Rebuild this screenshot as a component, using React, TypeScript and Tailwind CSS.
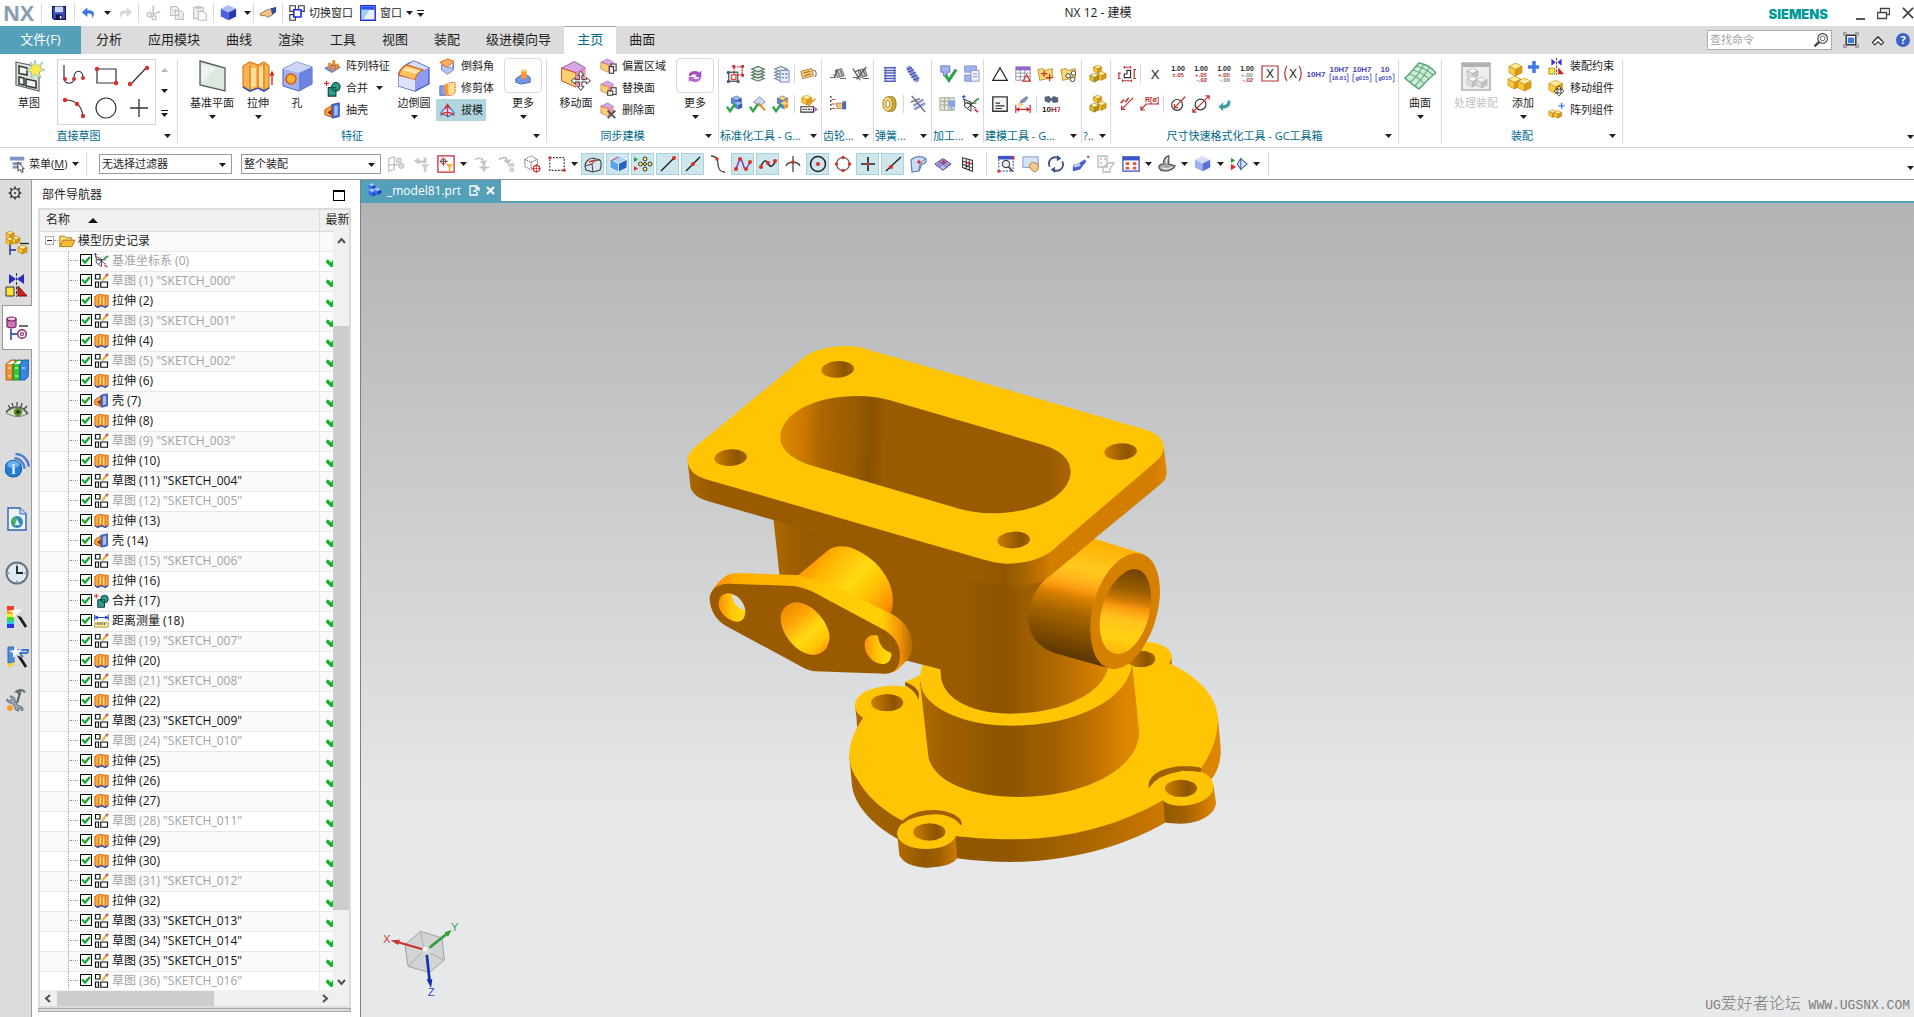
import React, { ReactNode } from "react";

/* ---------- primitives ---------- */

function Svg({ s = 20, vb = 20, children }: { s?: number; vb?: number; children: ReactNode }) {
  return (
    <svg width={s} height={s} viewBox={`0 0 ${vb} ${vb}`} fill="none" className="shrink-0" aria-hidden="true">
      {children}
    </svg>
  );
}

function Caret({ muted = false }: { muted?: boolean }) {
  return (
    <svg width="7" height="4" viewBox="0 0 7 4" className="shrink-0" aria-hidden="true">
      <path d="M0 0H7L3.5 4Z" fill={muted ? "#b4b4b4" : "#1e1e1e"} />
    </svg>
  );
}

const YELLOW = ["#ffeb9c", "#fbc93c", "#dc9a16"];
const BLUE = ["#c3cdf5", "#8496ec", "#4257cf"];
const GRAY = ["#f4f4f4", "#dcdcdc", "#c4c4c4"];

function Box({ x, y, s, c, line = "none" }: { x: number; y: number; s: number; c: string[]; line?: string }) {
  const q = s / 4;
  return (
    <g stroke={line} strokeWidth=".7" strokeLinejoin="round">
      <path d={`M${x} ${y + q}L${x + 2 * q} ${y}L${x + s} ${y + q}L${x + 2 * q} ${y + 2 * q}Z`} fill={c[0]} />
      <path d={`M${x} ${y + q}L${x + 2 * q} ${y + 2 * q}V${y + s}L${x} ${y + 3 * q}Z`} fill={c[1]} />
      <path d={`M${x + s} ${y + q}L${x + 2 * q} ${y + 2 * q}V${y + s}L${x + s} ${y + 3 * q}Z`} fill={c[2]} />
    </g>
  );
}

function Dot({ x, y, r = 1.7 }: { x: number; y: number; r?: number }) {
  return <circle cx={x} cy={y} r={r} fill="#dd2f2a" />;
}

/* ---------- title bar icons ---------- */

const icSave = (
  <Svg s={16}>
    <path d="M2 2H18V18H4L2 16Z" fill="#3f4fc4" stroke="#141a5e" strokeWidth="1.6" />
    <path d="M5 2H15V9H5Z" fill="#cfd6f4" />
    <path d="M6 12H14V18H6Z" fill="#10143c" />
    <path d="M11 13.5H13V17H11Z" fill="#fff" />
  </Svg>
);
const icUndo = (
  <Svg s={16}>
    <path d="M1 9L8 3V7C15 5 19 10 14 17C15 12 13 10 8 11V15Z" fill="#3a76dc" />
  </Svg>
);
const icRedo = (
  <Svg s={16}>
    <path d="M19 9L12 3V7C5 5 1 10 6 17C5 12 7 10 12 11V15Z" fill="#d6d6d6" />
  </Svg>
);
const icCut = (
  <Svg s={16}>
    <path d="M9 1V11M18 8L8 12" stroke="#c4c4c4" strokeWidth="2" />
    <circle cx="4" cy="12" r="2.6" stroke="#c4c4c4" strokeWidth="1.8" />
    <circle cx="10" cy="16" r="2.6" stroke="#c4c4c4" strokeWidth="1.8" />
  </Svg>
);
const icCopy = (
  <Svg s={16}>
    <path d="M2 2H9L12 5V13H2ZM8 7H14L18 10V18H8Z" fill="#f6f6f6" stroke="#c2c2c2" strokeWidth="1.4" />
    <path d="M4 6H9M4 9H7M10 12H16M10 15H16" stroke="#c2c2c2" />
  </Svg>
);
const icPaste = (
  <Svg s={16}>
    <path d="M2 3H14V17H2Z" fill="#ececec" stroke="#c2c2c2" strokeWidth="1.4" />
    <path d="M5 1H11V5H5Z" fill="#c8c8c8" />
    <path d="M8 8H14L18 11V19H8Z" fill="#f9f9f9" stroke="#c2c2c2" strokeWidth="1.4" />
  </Svg>
);
const icCube = (
  <Svg s={18}>
    <Box x={2} y={1} s={17} c={["#aebafa", "#4b60e2", "#2737ae"]} />
  </Svg>
);
const icHand = (
  <Svg s={18}>
    <path d="M1 11L8 7L14 5L15 12L9 15L7 13L2 13Z" fill="#f3c489" stroke="#7a5a30" strokeWidth=".8" />
    <path d="M13 5L19 3V9L15 12Z" fill="#2b4ba0" />
  </Svg>
);
const icSwitch = (
  <Svg s={16}>
    <path d="M1 1H8V8H1ZM12 1H19V8H12ZM1 12H8V19H1Z" stroke="#333" strokeWidth="1.4" fill="#fff" />
    <path d="M6 6H15V15H6Z" fill="#fff" stroke="#1b2ff0" strokeWidth="2" />
  </Svg>
);
const icWindow = (
  <Svg s={16}>
    <path d="M1 1H19V19H1Z" fill="#eaf3fc" stroke="#1a2ff2" strokeWidth="1.8" />
    <path d="M2 2H18V6H2Z" fill="#2a50e6" />
    <path d="M2 6H12L4 18H2Z" fill="#a9cdf0" />
  </Svg>
);

/* ---------- ribbon icons ---------- */

const icSketch = (
  <Svg s={32} vb={32}>
    <path d="M3 2L26 7V31L3 25Z" fill="#dbe4dc" stroke="#5c6660" strokeWidth="1.2" />
    <path d="M6 6L14 8V15L6 13.500ZM6 17L11 18V25L6 24ZM13 19L23 21V28L13 26Z" fill="#edf3ee" stroke="#333" strokeWidth="1.5" />
    <path d="M22 0L24 6L30 2L27 8L32 10L26 12L28 18L22 14L18 18L18.500 12L13 10L19 7.500L17 2L21 5Z" fill="#ffe94c" stroke="#74b8d8" strokeWidth=".7" />
  </Svg>
);
const icPlane = (
  <Svg s={32} vb={32}>
    <path d="M4 1L29 8V31L4 25Z" fill="#dde9df" stroke="#555f58" strokeWidth="1.3" />
    <path d="M6 4L20 8L6 22Z" fill="#eef5ef" />
  </Svg>
);
const icExtrude = (
  <Svg s={32} vb={32}>
    <path d="M1 6L8 2L16 5L22 2L27 6V28L22 31L16 28L8 31L1 27Z" fill="#f7b354" stroke="#e07a1c" strokeWidth="1.2" />
    <path d="M8 5V30M16 6V27M22 4V30" stroke="#d9701c" strokeWidth="1" />
    <path d="M9 8H14V26L9 28ZM17 8L21 6V28L17 26Z" fill="#ffdf96" />
    <path d="M1 27L8 31L16 28L22 31L27 28" stroke="#3556c4" strokeWidth="1.6" />
    <path d="M30 25V13M28 16L30 12L32 16" stroke="#d02a24" strokeWidth="1.4" />
  </Svg>
);
const icHole = (
  <Svg s={32} vb={32}>
    <path d="M2 9L16 2L31 7V24L18 31L2 26Z" fill="#a3b2f0" stroke="#4a63c4" />
    <path d="M2 9L16 2L31 7L18 13Z" fill="#ccd7f8" />
    <path d="M31 7V24L18 31V13Z" fill="#6b82de" />
    <circle cx="10" cy="19" r="5" fill="#ffb52e" stroke="#e2541c" strokeWidth="1.6" />
  </Svg>
);
const icBlend = (
  <Svg s={32} vb={32}>
    <path d="M1 13C3 7 8 4 16 1L31 8V24L17 31L1 26Z" fill="#8d9cf2" stroke="#3b53b8" strokeWidth="1.2" />
    <path d="M16 1L31 8C28 9 26 10 24 11L9 5Z" fill="#d5ddfa" />
    <path d="M1 14C3 8 6 6 9 5L25 10C20 12 18 15 17 20L1 15Z" fill="#fac15a" stroke="#d1621c" strokeWidth="1.2" />
    <path d="M4 10L18 14L22 11L9 7Z" fill="#ffe3ab" />
    <path d="M1 16L17 20V31L1 26Z" fill="#dde4fa" />
  </Svg>
);
const icMore = (
  <Svg s={18}>
    <path d="M2 13L8 9H15L18 12V17L8 19L2 17Z" fill="#7396e4" stroke="#3d5eb4" />
    <path d="M8 4H14V13H8Z" fill="#f79a2c" />
    <ellipse cx="11" cy="4" rx="3" ry="1.800" fill="#ffcf7c" />
  </Svg>
);
const icSync = (
  <Svg s={18}>
    <path d="M3 9C4 4 11 3 15 6L17 4V11H10L12 9C9 7 6 8 5 11Z" fill="#a64fc0" />
    <path d="M17 11C16 17 9 18 5 15L3 17V11H10L8 12.500C11 14 14 13 15 11Z" fill="#b96bd0" />
  </Svg>
);
const icPattern = (
  <Svg s={17}>
    <path d="M1 12L11 7L19 11L9 17Z" fill="#7c98e4" stroke="#4763bb" />
    <path d="M5 6H8V12H5ZM10 3H13V9H10ZM9 9H12V15H9ZM14 7H17V13H14Z" fill="#f79a2c" stroke="#c86518" strokeWidth=".5" />
  </Svg>
);
const uniteShape = (
  <>
    <path d="M5 9H14V19H5Z" fill="#25a08a" stroke="#1a3c36" strokeWidth="1.3" />
    <circle cx="14" cy="8" r="5" fill="#25a08a" stroke="#1a3c36" strokeWidth="1.3" />
    <path d="M9 9H14V13" stroke="#1a3c36" strokeWidth="1" />
    <path d="M0 4H6M3 1V7" stroke="#d8231f" strokeWidth="1.3" />
  </>
);
const icUnite = <Svg s={17}>{uniteShape}</Svg>;
const shellShape = (
  <>
    <path d="M9 3L18 1V17L10 19Z" fill="#4b74d6" stroke="#2a4aa4" />
    <path d="M1 9L9 4V18L1 15Z" fill="#f7a23c" stroke="#a94417" />
    <path d="M4 12L9 9V16Z" fill="#8c2f17" />
    <path d="M12 5L16 4V15L12 16Z" fill="#a8c0f4" />
  </>
);
const icShell = <Svg s={17}>{shellShape}</Svg>;
const icChamfer = (
  <Svg s={17}>
    <path d="M3 8L16 12L17 5V14L10 19L3 14Z" fill="#b9c6f3" stroke="#5d76cc" />
    <path d="M1 5L10 1L18 4L9 11Z" fill="#fbb45e" stroke="#cf5a22" />
  </Svg>
);
const icTrim = (
  <Svg s={17}>
    <path d="M1 7H9V18H1Z" fill="#8e9cec" stroke="#4a5fc4" />
    <path d="M9 5L14 3H19V15L15 18H9Z" fill="#fde08c" stroke="#d0342a" strokeDasharray="2 1" />
    <path d="M6 5H11V18H7Z" fill="#f39a3c" />
  </Svg>
);
const icDraft = (
  <Svg s={17}>
    <path d="M10 3L18 13L11 17L2 13Z" fill="#cfdcf8" stroke="#3a5cc0" strokeWidth="1.2" />
    <path d="M10 18V4M7 8L10 3L13 8M2 16C5 11 14 11 18 16" stroke="#d8302a" strokeWidth="1.5" />
  </Svg>
);
function faceBox(extra: ReactNode, s: number) {
  return (
    <Svg s={s}>
      <path d="M1 5L9 1L16 5L10 8Z" fill="#d7a9e4" stroke="#9a56b4" strokeWidth=".6" />
      <path d="M1 5L10 8V17L1 13Z" fill="#fccf72" stroke="#d2402c" strokeWidth=".6" />
      <path d="M16 5L10 8V17L16 13Z" fill="#eb94ad" />
      {extra}
    </Svg>
  );
}
const icMoveFace = faceBox(
  <path d="M13 7L15 9.500H13.700V12.300H16.500V11L19 13L16.500 15V13.700H13.700V16.500H15L13 19L11 16.500H12.300V13.700H9.500V15L7 13L9.500 11V12.300H12.300V9.500H11Z" fill="#fff" stroke="#333" strokeWidth=".6" />,
  32,
);
const icOffset = faceBox(<path d="M11 10V18H16V10ZM13 10V7H19V15H16" fill="#f3f3f3" stroke="#333" strokeWidth="1.2" />, 17);
const icReplace = faceBox(<path d="M9 13H15V18H9ZM13 13V9H19V17H15" fill="#f3f3f3" stroke="#333" strokeWidth="1.2" />, 17);
const icDelete = faceBox(<path d="M9 10L18 19M18 10L9 19" stroke="#555" strokeWidth="2.2" />, 17);

const icSurface = (
  <Svg s={32} vb={32}>
    <path d="M1 18C6 14 10 8 15 3C22 4 28 8 32 13C26 17 21 23 15 29C11 26 6 23 1 18Z" fill="#cfead8" stroke="#4fa374" strokeWidth="1.4" />
    <path d="M5 14C12 16 17 20 20 24M9 10C16 12 21 15 25 19M12 6C19 7 24 11 29 15M6 22C11 19 16 12 20 4M11 26C16 21 21 15 25 8" stroke="#5aab7d" strokeWidth="1.1" />
  </Svg>
);
const icProcess = (
  <Svg s={32} vb={32}>
    <path d="M2 3H30V30H2Z" fill="#eeeeee" stroke="#b2b2b2" strokeWidth="1.6" />
    <path d="M2 3H30V7H2Z" fill="#b0b0b0" />
    <Box x={7} y={8} s={11} c={GRAY} line="#b6b6b6" />
    <Box x={7} y={16} s={11} c={GRAY} line="#b6b6b6" />
    <Box x={16} y={17} s={11} c={GRAY} line="#b6b6b6" />
  </Svg>
);
const icAdd = (
  <Svg s={32} vb={32}>
    <Box x={2} y={3} s={13} c={YELLOW} line="#c78a14" />
    <Box x={1} y={16} s={13} c={YELLOW} line="#c78a14" />
    <Box x={11} y={18} s={13} c={YELLOW} line="#c78a14" />
    <path d="M27 1V13M21 7H32" stroke="#3f7be8" strokeWidth="3.500" />
  </Svg>
);
const icConstraint = (
  <Svg s={17}>
    <path d="M4 1V9L9 5ZM16 1V9L11 5Z" fill="#3a2fd0" />
    <path d="M10 0V20" stroke="#333" strokeDasharray="3 1.500" />
    <path d="M1 12H8V19H1Z" fill="#ffe34a" stroke="#a88b0e" />
    <path d="M12 11L19 19H12Z" fill="#d0201c" />
  </Svg>
);
const icMoveComp = (
  <Svg s={17}>
    <Box x={1} y={0} s={16} c={YELLOW} line="#c78a14" />
    <path d="M13 7L15.500 10H14V12H16V10.500L19 13L16 15.500V14H14V16H15.500L13 19L10.500 16H12V14H10V15.500L7 13L10 10.500V12H12V10H10.500Z" fill="#fff" stroke="#222" strokeWidth=".8" />
  </Svg>
);
const icPatternComp = (
  <Svg s={17}>
    <Box x={1} y={9} s={9} c={YELLOW} line="#c07f10" />
    <Box x={7} y={10} s={9} c={YELLOW} line="#c07f10" />
    <path d="M16 1V8M12.500 4.500H19.500" stroke="#3f7be8" strokeWidth="1.600" />
  </Svg>
);

/* sketch gallery */
const icProfile = (
  <Svg s={24} vb={24}>
    <path d="M2 1V14C2 21 12 21 12 14C12 5 21 5 21 14" stroke="#333" strokeWidth="1.200" />
    <Dot x={3} y={15} r={2} />
    <Dot x={12} y={15} r={2} />
    <Dot x={21} y={14} r={2} />
  </Svg>
);
const icRect = (
  <Svg s={24} vb={24}>
    <path d="M3 5H22V19H3Z" stroke="#333" strokeWidth="1.200" />
    <Dot x={3} y={5} r={2.200} />
    <Dot x={22} y={19} r={2.200} />
  </Svg>
);
const icLine = (
  <Svg s={24} vb={24}>
    <path d="M3 21L20 3" stroke="#333" strokeWidth="1.200" />
    <Dot x={3} y={20} r={2.200} />
    <Dot x={20} y={4} r={2.200} />
  </Svg>
);
const icArc = (
  <Svg s={24} vb={24}>
    <path d="M3 4C14 4 20 10 21 21" stroke="#333" strokeWidth="1.200" />
    <Dot x={3} y={4} r={2.200} />
    <Dot x={15} y={8} r={2.200} />
    <Dot x={21} y={20} r={2.200} />
  </Svg>
);
const icCircle = (
  <Svg s={24} vb={24}>
    <circle cx="12" cy="12" r="10" stroke="#333" strokeWidth="1.200" />
  </Svg>
);
const icPlus = (
  <Svg s={24} vb={24}>
    <path d="M12 3V21M3 12H21" stroke="#333" strokeWidth="1.300" />
  </Svg>
);

/* GC toolkit */
const gcSelect = (
  <Svg s={18}>
    <path d="M9 2H18V11H9Z" stroke="#d5302b" strokeWidth="1.500" strokeDasharray="2 1" />
    <path d="M3 8H13V18H3Z" stroke="#5a6274" strokeWidth="1.500" />
    <path d="M6 11H11V16H6Z" stroke="#e05238" strokeWidth="1.500" />
    <path d="M7 0H10V3H7ZM17 0H20V3H17ZM17 10H20V13H17Z" fill="#d5302b" />
    <path d="M1 7H4V10H1ZM1 17H4V20H1ZM12 17H15V20H12Z" fill="#4c5670" />
  </Svg>
);
const stack = (c: string) => (
  <>
    <path d="M3 15L10 12L17 15L10 18Z" stroke={c} strokeWidth="1.300" fill="#e4efe6" />
    <path d="M3 11.500L10 8.500L17 11.500L10 14.500Z" stroke={c} strokeWidth="1.300" fill="#e4efe6" />
    <path d="M3 8L10 5L17 8L10 11Z" stroke={c} strokeWidth="1.300" fill="#e4efe6" />
    <path d="M3 4.500L10 1.500L17 4.500L10 7.500Z" stroke={c} strokeWidth="1.300" fill="#e4efe6" />
  </>
);
const gcLayers = <Svg s={18}>{stack("#5b7564")}</Svg>;
const gcLayerDoc = (
  <Svg s={18}>
    {stack("#7b8f9a")}
    <path d="M9 6H19V19H9Z" fill="#e4ebfb" stroke="#6b83c6" />
    <path d="M11 10H13M15 10H17M11 14H13M15 14H17" stroke="#3f67c9" strokeWidth="1.600" />
  </Svg>
);
const gcTag = (
  <Svg s={18}>
    <path d="M1 7L13 4L15 12L3 15Z" fill="#fbc97a" stroke="#b0792a" />
    <path d="M4 9L11 7M5 12L12 10" stroke="#8a5a1c" />
    <path d="M14 6C18 5 19 10 17 13" stroke="#777" strokeWidth="1.200" />
  </Svg>
);
const partCheck = (c: string[]) => (
  <Svg s={18}>
    <Box x={6} y={1} s={11} c={c} line="#3c5aa8" />
    <Box x={9} y={7} s={9} c={c} />
    <path d="M1 13L4.500 18L10 10" stroke="#2fa548" strokeWidth="2.600" />
  </Svg>
);
const gcPartA = partCheck(["#9dbcf0", "#5c86dc", "#335bb4"]);
const gcPartB = (
  <Svg s={18}>
    <path d="M5 8L12 2L18 8L12 12Z" fill="#cfdaf2" stroke="#6b86c6" />
    <path d="M10 9L18 17" stroke="#e0932c" strokeWidth="2.400" />
    <path d="M1 13L4.500 18L10 10" stroke="#2fa548" strokeWidth="2.600" />
  </Svg>
);
const gcPartC = partCheck(["#ffd37a", "#5c86dc", "#f2992a"]);
const gcEdit = (
  <Svg s={18}>
    <Box x={2} y={0} s={11} c={YELLOW} line="#c78a14" />
    <path d="M1 13H15V19H1Z" fill="#fff" stroke="#333" strokeWidth="1.200" />
    <path d="M3 16H13" stroke="#333" strokeWidth="1.600" strokeDasharray="2 1" />
    <path d="M9 12L17 4" stroke="#e0a53a" strokeWidth="2.200" />
    <path d="M16 13L20 16L16 19Z" fill="#b25ad0" />
  </Svg>
);
const gearPair = (lines: string) => (
  <Svg s={18}>
    <path d="M7 6L14 4L17 12L9 14Z" fill="#c6c6c6" stroke="#666" strokeWidth="1" />
    <path d="M1 14H7L5 10M12 15H19M9 6L12 13M12 5L15 12" stroke="#555" strokeWidth="1" />
    <path d={lines} stroke="#555" strokeWidth="1.300" />
  </Svg>
);
const gcGearA = gearPair("M6 14L9 5");
const gcGearB = gearPair("M1 4L9 17M3 8L8 5M5 16L16 2");
const gcGearC = (
  <Svg s={18}>
    <path d="M2 1V19" stroke="#444" strokeWidth="1.600" strokeDasharray="2 2.500" />
    <path d="M3 5H7M3 10H7M3 15H7" stroke="#c03a30" />
    <path d="M8 9H15V15H9Z" fill="#f5c77e" stroke="#9a7030" strokeWidth=".7" />
    <path d="M15 7H19V16H15Z" fill="#4b62c6" />
  </Svg>
);
const gcSpringA = (
  <Svg s={18}>
    <path d="M5 2V18M15 2V18" stroke="#8f9bd6" strokeWidth="2" />
    <path d="M4 3H16M4 6H16M4 9H16M4 12H16M4 15H16M4 18H16" stroke="#4f60b8" strokeWidth="1.700" strokeLinecap="round" />
  </Svg>
);
const gcSpringB = (
  <Svg s={18}>
    <path d="M6 4L14 16" stroke="#8d99d8" strokeWidth="6" strokeLinecap="round" />
    <path d="M3 5L9 3M4 8L11 5M6 11L13 8M8 14L15 11M10 17L17 14" stroke="#3b4aa4" strokeWidth="1.200" />
  </Svg>
);
const gcDisc = (
  <Svg s={18}>
    <path d="M8 2H13C18 3 18 17 13 18H8Z" fill="#cfa93a" stroke="#8f7018" />
    <ellipse cx="7.500" cy="10" rx="5.500" ry="8" fill="#f3d877" stroke="#9a7a20" />
    <ellipse cx="7.500" cy="10" rx="2.200" ry="4" fill="#fff" stroke="#9a7a20" />
  </Svg>
);
const gcNoSpring = (
  <Svg s={18}>
    <path d="M5 12L16 5M6 16L18 9" stroke="#8b99d4" strokeWidth="2.800" />
    <path d="M3 1L18 19M2 8L12 4" stroke="#666" strokeWidth="1.500" />
  </Svg>
);
const gcMachA = (
  <Svg s={18}>
    <path d="M2 1H12V8H9V12H5V8H2Z" fill="#a3b4ec" stroke="#5d74c0" />
    <path d="M7 11L11 17L19 5" stroke="#27a546" strokeWidth="3.400" />
  </Svg>
);
const gcMachB = (
  <Svg s={18}>
    <path d="M3 1H16V8H3ZM3 11H10V18H3Z" fill="#a3b4ec" stroke="#8092cc" />
    <path d="M10 6H19V18H10Z" fill="#f0f3fc" stroke="#7d8fc8" />
    <path d="M12 10H17M12 13H17" stroke="#7d8fc8" />
  </Svg>
);
const gcMachC = (
  <Svg s={18}>
    <path d="M1 3H17V17H1ZM1 7H17M1 11H17M6 3V17M11 3V17" fill="#e2e7da" stroke="#9aa58c" />
    <path d="M10 6H18V13H15V17H13V13H10Z" fill="#8ea2e2" />
  </Svg>
);
const csysShape = (
  <>
    <path d="M3 5L10 8V18L3 13ZM3 9H16M6 15L15 6M5 8L16 15" stroke="#333" strokeWidth="1.100" />
    <path d="M2 0V6M0 2H4" stroke="#2a3fd0" strokeWidth="1.200" />
    <path d="M14 7L19 4" stroke="#23a040" strokeWidth="2" />
    <path d="M14 16L18 19" stroke="#d0302a" strokeWidth="1.800" />
  </>
);
const gcCsys = <Svg s={18}>{csysShape}</Svg>;
const gcTriangle = (
  <Svg s={18}>
    <path d="M10 3L18 17H2Z" stroke="#222" strokeWidth="1.400" />
  </Svg>
);
const gcTable = (
  <Svg s={18}>
    <path d="M2 2H18V17H2ZM2 9H18M2 13H18M7 5V17M12 5V17" fill="#fff" stroke="#8e8ea0" />
    <path d="M2 2H18V6H2Z" fill="#9468cc" />
    <path d="M14 11L18 18H10Z" fill="#fff" stroke="#cc2b2b" strokeWidth="1.300" />
  </Svg>
);
const folderBase = <path d="M1 5L7 4L9 6L17 4V14L3 17Z" fill="#fbd978" stroke="#b98f26" />;
const gcFolderA = (
  <Svg s={18}>
    {folderBase}
    <path d="M8 6V13M4.500 9.500H11.500M14 10V18M10 14H18" stroke="#cf2b26" strokeWidth="1.400" />
  </Svg>
);
const gcFolderB = (
  <Svg s={18}>
    {folderBase}
    <circle cx="9" cy="12" r="2.500" fill="#fff" stroke="#333" />
    <circle cx="15" cy="9" r="2.500" fill="#fff" stroke="#333" />
    <circle cx="14" cy="16" r="2.500" fill="#fff" stroke="#333" />
  </Svg>
);
const gcNote = (
  <Svg s={18}>
    <path d="M2 2H18V18H2Z" fill="#f4f4f4" stroke="#333" strokeWidth="1.500" />
    <path d="M5 9H10M5 12H15M5 15H12" stroke="#333" strokeWidth="1.300" />
  </Svg>
);
const gcBrush = (
  <Svg s={18}>
    <path d="M14 1L16 3L12 8L6 10L7 6Z" fill="#7a8fb4" />
    <path d="M5 8L11 10L8 13L4 12Z" fill="#f4d58a" />
    <path d="M2 11V20M18 11V20M3 16H17M6 14L3 16L6 18M14 14L17 16L14 18" stroke="#cc2b2b" strokeWidth="1.300" />
  </Svg>
);
const gcFind = (
  <Svg s={18}>
    <path d="M3 2L8 1L10 4L13 1L18 3V8L13 9L10 6L8 9L3 7Z" fill="#56617a" />
    <text x="0" y="19" fontSize="9" fontWeight="700" fill="#222" fontFamily="Liberation Sans">
      10<tspan fill="#b03030">H7</tspan>
    </text>
  </Svg>
);
const gcBoxes = (
  <Svg s={18}>
    <Box x={5} y={0} s={9} c={YELLOW} line="#b98512" />
    <Box x={9} y={7} s={10} c={YELLOW} line="#b98512" />
    <Box x={1} y={9} s={10} c={["#fff3b8", "#e7c12c", "#b98f12"]} line="#8c7010" />
  </Svg>
);
const dimShaft = (
  <Svg s={18}>
    <path d="M7 14V10H10V6H14V14Z" stroke="#333" strokeWidth="1.300" />
    <path d="M1 9V15M0 9H3M0 15H3M18 5V15M17 5H20M17 15H20M7 1V4M14 1V4M7 2.500H14M5 16V19M15 16V19M5 17.500H15" stroke="#c03030" strokeWidth="1.300" />
  </Svg>
);
const txt = (t: string, x: number, y: number, size: number, fill: string, bold = false) => (
  <text key={`${t}${x}${y}`} x={x} y={y} fontSize={size} fill={fill} fontWeight={bold ? 700 : 400} fontFamily="Liberation Sans" textAnchor="middle">
    {t}
  </text>
);
const dimX = <Svg>{txt("X", 10, 15, 13, "#222")}</Svg>;
const dimTol = (a: string, b: string | null, ca: string, cb: string) => (
  <Svg>
    {txt("1.00", 10, 7, 7, "#222", true)}
    {txt(a, 10, 13, 6, ca, true)}
    {b && txt(b, 11, 18, 6, cb, true)}
  </Svg>
);
const dimBoxX = (
  <Svg>
    <path d="M2 2H18V17H2Z" stroke="#b53232" strokeWidth="1.200" />
    {txt("X", 10, 14, 12, "#222")}
  </Svg>
);
const dimParenX = (
  <Svg>
    <path d="M4 2C1 6 1 13 4 17M16 2C19 6 19 13 16 17" stroke="#b53232" strokeWidth="1.200" />
    {txt("X", 10, 14, 12, "#222")}
  </Svg>
);
const dimH7 = <Svg>{txt("10H7", 10, 13, 8, "#4646b8", true)}</Svg>;
const dimH7b = (top: string, low: string) => (
  <Svg>
    {txt(top, 10, 8, 8, "#4646b8", true)}
    {txt(low, 10, 16, 6, "#4646b8", true)}
    <path d="M2.500 10H1V18H2.500M17.500 10H19V18H17.500" stroke="#4646b8" strokeWidth=".8" />
  </Svg>
);
const dimRadA = (
  <Svg s={18}>
    <path d="M4 16L17 3M4 12V16H8" stroke="#c03030" strokeWidth="1.300" />
    <path d="M3 9L7 5M8 8L12 3" stroke="#c03030" strokeWidth="1.700" />
  </Svg>
);
const dimRadB = (
  <Svg s={20}>
    <path d="M1 16L6 10H19M1 12V16H5" stroke="#c03030" strokeWidth="1.200" />
    {txt("R[ø]", 12, 8, 7, "#c03030", true)}
  </Svg>
);
const dimDiaA = (
  <Svg s={18}>
    <circle cx="9" cy="11" r="6" stroke="#333" strokeWidth="1.300" />
    <path d="M6 14L18 2M6 10V14H10" stroke="#c03030" strokeWidth="1.400" />
  </Svg>
);
const dimDiaB = (
  <Svg s={18}>
    <circle cx="9.500" cy="10.500" r="6" stroke="#333" strokeWidth="1.300" />
    <path d="M1 19L19 1M1 15V19H5M15 1H19V5" stroke="#c03030" strokeWidth="1.400" />
  </Svg>
);
const dimBack = (
  <Svg s={18}>
    <path d="M4 13L9 8V11C12 11 14 10 14 6H17C18 12 14 15 9 15V18Z" fill="#3f9ea4" />
  </Svg>
);

/* ---------- selection bar icons ---------- */

const sbMenu = (
  <Svg s={18}>
    <path d="M1 2H17V6H1ZM4 8H14V11H4ZM4 12H10V15H4Z" fill="#7e93c4" />
    <path d="M10 8V18L12.500 16L14 19.500L15.800 18.800L14.500 15.500H17Z" fill="#fff" stroke="#222" strokeWidth=".9" />
  </Svg>
);
const sbTree = (
  <Svg s={18}>
    <path d="M2 4L8 2V16L2 18ZM2 11H13" stroke="#bdbdbd" strokeWidth="1.300" />
    <circle cx="13" cy="6" r="3" fill="#dadada" stroke="#bcbcbc" />
    <circle cx="16" cy="12" r="3" fill="#dadada" stroke="#bcbcbc" />
  </Svg>
);
const sbFilterOff = (
  <Svg s={18}>
    <path d="M2 6L8 3V6H13V3H16V9H8V11Z" fill="#c8c8c8" />
    <path d="M10 10H19L16 14V19H13V14Z" fill="#d0d0d0" />
  </Svg>
);
const sbFilter = (
  <Svg s={18}>
    <path d="M1 1H19V19H1Z" stroke="#c52a38" strokeWidth="1.400" />
    <circle cx="7" cy="7" r="3" stroke="#c52a38" />
    <path d="M7 3V12M3 7H12" stroke="#333" />
    <path d="M10 10H18L15 14V18H13V14Z" fill="#f2b53a" />
  </Svg>
);
const sbRot = (
  <Svg s={18}>
    <path d="M2 5C8 2 12 4 12 9M8 7L12 10L15 6M12 9V19M7 14H18" stroke="#bdbdbd" strokeWidth="1.500" />
    <circle cx="12" cy="14" r="2.500" stroke="#bdbdbd" />
  </Svg>
);
const sbRot2 = (
  <Svg s={18}>
    <path d="M1 5C7 1 10 3 11 8M7 6L11 9L14 5" stroke="#c0c0c0" strokeWidth="2" />
    <path d="M11 9H18V13H11ZM13 14H18V19H13Z" fill="#d2d2d2" />
  </Svg>
);
const sbCube = (
  <Svg s={18}>
    <path d="M2 5L9 1L16 5V13L9 16L2 13ZM2 5L9 8L16 5M9 8V16" stroke="#444" strokeDasharray="1.500 1" />
    <circle cx="15" cy="15" r="3.500" fill="#fff" stroke="#cc2b2b" strokeWidth="1.300" />
    <path d="M15 10V20M10 15H20" stroke="#cc2b2b" strokeWidth=".8" />
  </Svg>
);
const sbMarquee = (
  <Svg s={18}>
    <path d="M2 3H18V17H2Z" stroke="#333" strokeWidth="1.300" strokeDasharray="2 1.500" />
    <Dot x={2} y={3} />
    <Dot x={18} y={17} />
  </Svg>
);
const sbSolid = (
  <Svg>
    <path d="M2 12C2 8 6 4 10 4L17 6C19 9 18 13 17 16L10 18L3 16Z" fill="#dce3ee" stroke="#444" strokeWidth="1.100" />
    <path d="M2 12L9 10L10 18M9 10C10 7 13 6 17 6" stroke="#444" />
    <path d="M6 8L12 6" stroke="#d8302a" strokeWidth="1.600" />
  </Svg>
);
const sbBlue = (
  <Svg>
    <Box x={2} y={1} s={17} c={["#a6d6fb", "#5aa4ec", "#2664c8"]} line="#fff" />
    <path d="M3 7L10 3" stroke="#e0583a" strokeWidth="1.300" />
  </Svg>
);
const sbSnap = (
  <Svg>
    <path d="M1 3L5 5.500L1 8Z" fill="#24a040" />
    <path d="M1 12L5 14.500L1 17Z" fill="#d8302a" />
    <g fill="#ffec5c" stroke="#333">
      <circle cx="12" cy="5" r="2" />
      <circle cx="12" cy="15" r="2" />
      <circle cx="7.500" cy="10" r="2" />
      <circle cx="17" cy="10" r="2" />
      <circle cx="12" cy="10" r="1.500" />
    </g>
  </Svg>
);
const sbEnd = (
  <Svg>
    <path d="M3 17L16 4" stroke="#222" strokeWidth="1.500" />
    <Dot x={16} y={4} r={2} />
  </Svg>
);
const sbMid = (
  <Svg>
    <path d="M3 17L17 3" stroke="#222" strokeWidth="1.400" />
    <Dot x={10} y={10} r={2} />
  </Svg>
);
const sbCurvePt = (
  <Svg>
    <path d="M3 2C9 2 10 6 10 10C10 14 12 18 17 18" stroke="#444" strokeWidth="1.300" />
    <Dot x={9} y={5} />
  </Svg>
);
const sbPoly = (
  <Svg>
    <path d="M3 16C7 2 8 4 10 10C12 18 13 16 17 8" stroke="#8a3cb4" strokeWidth="1.500" />
    <Dot x={3} y={15} r={2} />
    <Dot x={7} y={5} r={2} />
    <Dot x={13} y={15} r={2} />
    <Dot x={17} y={8} r={2} />
  </Svg>
);
const sbSpline = (
  <Svg>
    <path d="M2 14C7 3 9 7 11 11C13 14 16 11 18 6" stroke="#222" strokeWidth="1.500" />
    <Dot x={3} y={13} r={2} />
    <Dot x={10} y={9} r={2} />
    <Dot x={17} y={7} r={2} />
  </Svg>
);
const sbCross = (
  <Svg>
    <path d="M3 12C5 7 15 7 17 12M10 2V18" stroke="#444" strokeWidth="1.300" />
    <Dot x={10} y={8} />
  </Svg>
);
const sbCenter = (
  <Svg>
    <circle cx="10" cy="10" r="7.500" stroke="#222" strokeWidth="1.500" />
    <Dot x={10} y={10} r={2} />
  </Svg>
);
const sbQuad = (
  <Svg>
    <circle cx="10" cy="10" r="6.500" stroke="#555" strokeWidth="1.200" />
    <Dot x={10} y={3.500} />
    <Dot x={10} y={16.500} />
    <Dot x={3.500} y={10} />
    <Dot x={16.500} y={10} />
  </Svg>
);
const sbPoint = (
  <Svg>
    <path d="M10 3V17M3 10H17" stroke="#222" strokeWidth="1.600" />
    <Dot x={10} y={10} r={1.500} />
  </Svg>
);
const sbOnLine = (
  <Svg>
    <path d="M3 17L18 3" stroke="#222" strokeWidth="1.400" />
    <Dot x={8} y={13} r={2} />
  </Svg>
);
const sbFacePt = (
  <Svg>
    <path d="M3 6C6 3 10 2 15 3L18 5C19 8 17 10 14 10L11 17L4 18Z" fill="#c9daf3" stroke="#5d7fb4" strokeWidth="1.200" />
    <path d="M18 5C13 7 11 11 11 17" stroke="#5d7fb4" />
    <Dot x={11} y={8} />
  </Svg>
);
const sbMesh = (
  <Svg s={18}>
    <path d="M1 10L10 4L19 10L10 17Z" fill="#c3b6ea" stroke="#4a4796" strokeWidth="1.100" />
    <path d="M5.500 7L14.500 13.500M8 5.500L17 12M14.500 7L5.500 13.500M12 5.500L3 12" stroke="#4a4796" />
    <Dot x={11} y={8} />
  </Svg>
);
const sbGrid = (
  <Svg s={18}>
    <path d="M4 3L15 6V18L4 14ZM8 4V15.500M11.500 5V17M4 7L15 10M4 10.500L15 14" stroke="#333" strokeWidth="1.200" />
    <Dot x={11} y={9} />
  </Svg>
);
const sbZoom = (
  <Svg s={18}>
    <path d="M1 1H19V5H1Z" fill="#3b55c8" />
    <path d="M2 5V18H18V5" stroke="#3b55c8" strokeWidth="1.300" strokeDasharray="2 1.500" />
    <circle cx="10" cy="10" r="4" fill="#e4effa" stroke="#444" strokeWidth="1.300" />
    <path d="M13 13L17 18" stroke="#444" strokeWidth="2" />
    <Dot x={2} y={18} />
    <Dot x={18} y={3} />
  </Svg>
);
const sbPan = (
  <Svg s={18}>
    <path d="M1 2H18V14H1Z" fill="#d7e2f5" stroke="#7c96c8" />
    <path d="M9 10L12 8L18 10V16L15 19L11 17L8 13Z" fill="#f1c98e" stroke="#a97f3c" />
  </Svg>
);
const sbRotate = (
  <Svg s={18}>
    <path d="M3 13C0 6 6 1 12 3M17 7C20 14 14 19 8 17" stroke="#3e5583" strokeWidth="2" />
    <path d="M11 0L16 4L11 7ZM9 13L4 16L9 20Z" fill="#3e5583" />
  </Svg>
);
const sbPersp = (
  <Svg s={18}>
    <path d="M1 11L8 9L14 5L16 7L9 16L1 18Z" fill="#4a5ed4" />
    <path d="M1 11L8 9L10 12L3 14Z" fill="#c2ccf6" />
    <Dot x={18} y={2} r={1.300} />
  </Svg>
);
const sbCard = (
  <Svg s={20}>
    <path d="M2 2H11V13H2ZM7 14L12 9H18L14 15V18H7ZM4 5H6M4 9H6M8 5H10" stroke="#bcbcbc" strokeWidth="1.300" fill="#fafafa" />
  </Svg>
);
const sbLayout = (
  <Svg s={18}>
    <path d="M1 2H19V18H1Z" fill="#fff" stroke="#3550c0" strokeWidth="1.400" />
    <path d="M1 2H19V6H1Z" fill="#3b55c8" />
    <path d="M4 8H8V11H4ZM12 8H16V11H12ZM4 13H8V16H4ZM12 13H16V16H12Z" fill="#e05a3a" />
  </Svg>
);
const sbDisc = (
  <Svg s={18}>
    <path d="M1 14C1 11 4 10 6 10C6 5 8 1 12 1V10L19 12C17 17 8 19 3 17Z" fill="#a2a2a2" stroke="#444" strokeWidth="1.200" />
    <path d="M4 14C8 16 13 15 16 13" stroke="#e4e4e4" strokeWidth="1.400" />
    <path d="M9 9C9 6 10 4 11 3" stroke="#e8e8e8" strokeWidth="1.600" />
  </Svg>
);
const sbShade = (
  <Svg s={18}>
    <Box x={1} y={1} s={17} c={["#d4dbf9", "#9fadef", "#5b6fd8"]} />
  </Svg>
);
const sbClip = (
  <Svg s={18}>
    <path d="M1 3L6 6L1 9Z" fill="#2aa045" />
    <path d="M1 10L7 13L1 17Z" fill="#d8302a" />
    <path d="M8 10L12 4V16ZM12 4L19 10L12 16" fill="#dbe5f8" stroke="#4a66a8" strokeWidth="1.200" />
  </Svg>
);

/* ---------- resource bar icons ---------- */

const rbGear = (
  <Svg s={16}>
    <circle cx="10" cy="10" r="5.500" stroke="#333" strokeWidth="1.800" />
    <path d="M10 2V4M10 16V18M2 10H4M16 10H18M4 4L6 6M14 14L16 16M16 4L14 6M6 14L4 16" stroke="#333" strokeWidth="2" />
    <circle cx="10" cy="10" r="1.300" fill="#333" />
  </Svg>
);
const rbAssembly = (
  <Svg s={24} vb={24}>
    <Box x={1} y={0} s={8} c={YELLOW} line="#b98512" />
    <Box x={1} y={6} s={8} c={YELLOW} line="#b98512" />
    <Box x={7} y={5} s={8} c={YELLOW} line="#b98512" />
    <path d="M15 12.500H24" stroke="#222" strokeWidth="1.300" />
    <path d="M5 14V24M5 19H11" stroke="#1b2f9c" strokeWidth="1.400" />
    <Box x={13} y={14} s={9} c={YELLOW} line="#b98512" />
  </Svg>
);
const rbConstraint = (
  <Svg s={24} vb={24}>
    <path d="M4 1V11L11 6ZM19 1V11L12 6Z" fill="#2b2bc4" />
    <path d="M11.500 0V24" stroke="#333" strokeDasharray="3 1.500" />
    <path d="M1 14H9V23H1Z" fill="#ffe53a" stroke="#333" />
    <path d="M13 13L22 23H13Z" fill="#d0201c" stroke="#701010" />
  </Svg>
);
const rbPart = (
  <Svg s={24} vb={24}>
    <path d="M1 3V10C1 12.500 10 12.500 10 10V3Z" fill="#c879b4" stroke="#7c1d60" strokeWidth="1.200" />
    <ellipse cx="5.500" cy="3" rx="4.500" ry="2" fill="#f0cbe4" stroke="#7c1d60" strokeWidth="1.200" />
    <path d="M13 10H22" stroke="#222" strokeWidth="1.300" />
    <path d="M5 13V24M5 18H11" stroke="#1b2f9c" strokeWidth="1.400" />
    <circle cx="16" cy="18" r="4.300" stroke="#8a2468" strokeWidth="1.400" />
    <circle cx="16" cy="18" r="1.500" stroke="#8a2468" strokeWidth="1.200" />
  </Svg>
);
const rbBooks = (
  <Svg s={24} vb={24}>
    <path d="M1 6L6 2H11L8 6V22H1Z" fill="#f29232" stroke="#9c4c12" strokeWidth=".8" />
    <path d="M8 6L12 2H17L15 6V22H8Z" fill="#35c832" stroke="#167018" strokeWidth=".8" />
    <path d="M15 6L18 2H24L23 19L20 22H15Z" fill="#3589e4" stroke="#134a94" strokeWidth=".8" />
    <path d="M2 6L7 3H10L8 6ZM9 6L13 3H16L15 6Z" fill="#fff" />
    <path d="M3 10H6M3 18H6M10 10H13M10 18H13M17 10H20" stroke="#fff" strokeWidth="1.200" />
  </Svg>
);
const rbEye = (
  <Svg s={24} vb={24}>
    <path d="M1 15C7 8 17 8 22 16C15 20 8 19 1 15Z" fill="#d7dccb" stroke="#666" strokeWidth=".8" />
    <path d="M1 14C7 7 18 7 23 16M5 10L3 7M8 8L7 5M12 8V4M16 9L17 5M19 11L22 8" stroke="#444" strokeWidth="1.200" />
    <circle cx="13" cy="14" r="4.200" fill="#5f8a2c" />
    <circle cx="13" cy="14" r="1.800" fill="#1c2a10" />
  </Svg>
);
const rbInfo = (
  <Svg s={25} vb={24}>
    <path d="M9 5C14 5 18 9 19 15M10 1C17 1 22 6 23 13" stroke="#4f7fd0" strokeWidth="2.400" />
    <circle cx="8" cy="15" r="8" fill="#1f7ed8" stroke="#155aa0" />
    <ellipse cx="8" cy="11" rx="6" ry="3.500" fill="#69b2ee" />
    <text x="8" y="20" fontSize="13" fontWeight="700" fill="#fff" textAnchor="middle" fontFamily="Liberation Serif">
      i
    </text>
  </Svg>
);
const rbPage = (
  <Svg s={24} vb={24}>
    <path d="M3 1H15L21 7V23H3Z" fill="#eef4fd" stroke="#2f62ae" strokeWidth="1.400" />
    <path d="M15 1V7H21" fill="#c4d8f4" stroke="#2f62ae" />
    <circle cx="12" cy="15" r="6" fill="#2f86c8" />
    <path d="M7 13L11 10L13 13L11 15L14 19L9 19Z" fill="#55b648" />
    <path d="M10 18L12 12L15 18Z" fill="#e8f4fa" />
  </Svg>
);
const rbClock = (
  <Svg s={24} vb={24}>
    <circle cx="12" cy="12" r="10.500" fill="#dceaf6" stroke="#6a747e" strokeWidth="2" />
    <path d="M12 5V12H18" stroke="#222" strokeWidth="1.800" />
    <path d="M12 3V4.500M12 19.500V21M3 12H4.500M19.500 12H21" stroke="#555" />
  </Svg>
);
const wand = (
  <>
    <path d="M12 8L21 22" stroke="#1c1c1c" strokeWidth="2.800" />
    <path d="M10 1L12 5L17 4L14 8L16 12L11 10L8 13L8 8L4 6L9 5Z" fill="#fff" fillOpacity=".9" />
  </>
);
const rbPalette = (
  <Svg s={24} vb={24}>
    <path d="M2 1H9V6H2Z" fill="#f03c28" />
    <path d="M2 5H9V9H2Z" fill="#f8a820" />
    <path d="M2 9H9V12H2Z" fill="#f4f02c" />
    <path d="M2 12H9V16H2Z" fill="#3ad83c" />
    <path d="M2 16H9V19H2Z" fill="#2cc8e8" />
    <path d="M2 19H9V23H2Z" fill="#2438e0" />
    {wand}
  </Svg>
);
const rbMachine = (
  <Svg s={24} vb={24}>
    <path d="M3 2H9V18H3Z" fill="#4a90d8" stroke="#2a68ac" />
    <path d="M12 5H24L22 8H14L18 12" stroke="#3a78d0" strokeWidth="1.800" />
    <path d="M2 19L10 17L8 21L3 22Z" fill="#f4d048" />
    {wand}
  </Svg>
);
const rbTools = (
  <Svg s={24} vb={24}>
    <path d="M9 4C13 0 19 0 21 4L19 5L17 3L14 7L12 5Z" fill="#66736c" />
    <path d="M15 5L12 15" stroke="#59645e" strokeWidth="2.200" />
    <path d="M2 11L5 13L7 11L5 8C9 8 11 11 10 14L14 18C18 18 19 21 17 23L15 20L13 21L14 23C10 23 9 20 10 18L6 15C3 15 1 13 2 11Z" fill="#9aa3b8" stroke="#4c5468" strokeWidth=".8" />
    <circle cx="5" cy="20" r="3" fill="#f2a22c" />
  </Svg>
);

/* ---------- tree icons ---------- */

const trSketch = (
  <Svg s={15}>
    <path d="M2 2H8V8H2ZM2 12H6V19H2ZM9 12H18V19H9Z" stroke="#111" strokeWidth="1.600" fill="#fff" />
    <path d="M11 10L17 3" stroke="#e9b93c" strokeWidth="3" />
    <path d="M16 4L18.500 1" stroke="#c8402c" strokeWidth="2.500" />
  </Svg>
);
const trExtrude = (
  <Svg s={15} vb={32}>
    <path d="M2 8L10 3L30 5V26L24 30L16 26L8 30L2 26Z" fill="#fdb03e" stroke="#dd5a14" strokeWidth="2.200" />
    <path d="M10 8V28M17 6V26M24 6V28" stroke="#d6520f" strokeWidth="1.600" />
    <path d="M12 9H15V25H12ZM19 9H22V26H19Z" fill="#ffe28a" />
    <path d="M2 27L8 31L16 27L24 31L30 27" stroke="#2b50c8" strokeWidth="2.500" />
  </Svg>
);
const trMeasure = (
  <Svg s={15}>
    <path d="M1 2V10M19 2V10M2 6H18M5 4L2 6L5 8M15 4L18 6L15 8" stroke="#2440c8" strokeWidth="1.400" />
    <path d="M1 13H19V19H1Z" fill="#f4e2a0" stroke="#a98a2c" />
    <path d="M5 13V16M8 13V16M11 13V16M14 13V16" stroke="#333" />
  </Svg>
);
const trFolder = (
  <Svg s={16}>
    <path d="M1 17V4H7L9 6H16V9" fill="#fbdc74" stroke="#a9791a" strokeWidth="1.200" />
    <path d="M1 17L5 9H20L16 17Z" fill="#f5ba34" stroke="#a9791a" strokeWidth="1.200" />
  </Svg>
);

/* ---------- ribbon building blocks ---------- */

function Big({ icon, label, caret = false, framed = false, disabled = false, w }: { icon: ReactNode; label: string; caret?: boolean; framed?: boolean; disabled?: boolean; w: string }) {
  return (
    <button className={`flex shrink-0 flex-col items-center ${w} ${disabled ? "text-[#c3c3c3]" : ""}`} disabled={disabled}>
      <span className={framed ? "-mt-px flex h-[35px] w-[38px] items-center justify-center rounded border border-[#dadada]" : "flex h-[34px] items-center"}>{icon}</span>
      <span className="mt-[2px] leading-4 whitespace-nowrap">{label}</span>
      {caret && (
        <span className="mt-1">
          <Caret />
        </span>
      )}
    </button>
  );
}

function Small({ icon, label, caret = false, active = false }: { icon: ReactNode; label: string; caret?: boolean; active?: boolean }) {
  return (
    <button className={`flex h-[22px] items-center gap-[5px] self-start px-[3px] leading-4 whitespace-nowrap ${active ? "bg-[#b0d6e0]" : ""}`}>
      {icon}
      {label}
      {caret && (
        <span className="ml-[3px]">
          <Caret />
        </span>
      )}
    </button>
  );
}

function Group({ label, w, children, clip = false }: { label: string; w: string; children: ReactNode; clip?: boolean }) {
  return (
    <section aria-label={label} className={`flex h-[84px] shrink-0 flex-col border-r border-[#dadada] ${w}`}>
      <div className="flex h-[72px] items-start">{children}</div>
      <div className="flex h-[14px] items-center text-[#00688b]">
        <span className={`flex-1 leading-4 whitespace-nowrap ${clip ? "pl-px" : "text-center"}`}>{label}</span>
        <button aria-label={`${label} 选项`} className={`flex h-3 items-center justify-center ${clip ? "w-4" : "w-5"}`}>
          <Caret />
        </button>
      </div>
    </section>
  );
}

type Cell = ReactNode | "|";

function ToolGrid({ rows }: { rows: Cell[][] }) {
  return (
    <div className="flex flex-col pl-1">
      {rows.map((r, i) => (
        <div key={i} className="flex h-[30px] items-center">
          {r.map((c, j) =>
            c === "|" ? (
              <span key={j} className="mx-[2px] h-[18px] w-px bg-[#d6d6d6]" />
            ) : (
              <button key={j} aria-label={`工具 ${i + 1}-${j + 1}`} className="flex h-[22px] w-[23px] items-center justify-center">
                {c}
              </button>
            ),
          )}
        </div>
      ))}
    </div>
  );
}

function Sep({ h = "h-[20px]" }: { h?: string }) {
  return <span className={`w-px shrink-0 bg-[#dadada] ${h}`} />;
}

/* ---------- page sections ---------- */

function TitleBar() {
  const quick = "flex h-6 w-[23px] items-center justify-center";
  return (
    <header className="grid h-[26px] shrink-0 grid-cols-[1fr_auto_1fr] items-center bg-white">
      <div className="flex items-center">
        <span className="w-[41px] pl-[3px] text-[21px] leading-[26px] font-bold text-[#8a9fae]">NX</span>
        <Sep />
        <button aria-label="保存" className="flex w-[32px] justify-center pl-[2px]">{icSave}</button>
        <Sep />
        <button aria-label="撤销" className="flex w-[27px] justify-center">{icUndo}</button>
        <button aria-label="撤销列表" className="flex w-[10px] justify-center"><Caret /></button>
        <button aria-label="重做" className="flex w-[26px] justify-center">{icRedo}</button>
        <Sep />
        <span className="w-[3px]" />
        <button aria-label="剪切" className={quick}>{icCut}</button>
        <button aria-label="复制" className={quick}>{icCopy}</button>
        <button aria-label="粘贴" className={quick}>{icPaste}</button>
        <span className="w-[2px]" />
        <Sep />
        <button aria-label="显示" className="flex w-[28px] justify-center">{icCube}</button>
        <button aria-label="显示列表" className="flex w-[11px] justify-center"><Caret /></button>
        <Sep />
        <button aria-label="触控模式" className="flex w-[28px] justify-center">{icHand}</button>
        <Sep />
        <button className="flex items-center gap-1 pl-[6px] leading-4 whitespace-nowrap">{icSwitch}切换窗口</button>
        <button className="ml-[7px] flex items-center gap-1 leading-4 whitespace-nowrap">
          {icWindow}窗口
          <Caret />
        </button>
        <button aria-label="自定义" className="ml-1 flex flex-col items-center gap-[2px]">
          <span className="h-px w-[7px] bg-[#1e1e1e]" />
          <Caret />
        </button>
      </div>
      <h1 className="pl-[282px] text-[12px] leading-4 whitespace-nowrap">NX 12 - 建模</h1>
      <div className="flex items-center justify-end gap-3">
        <span className="mr-4 pt-[2px] font-[Inter] text-[13px] leading-4 font-black text-[#009999]">SIEMENS</span>
        <button aria-label="最小化" className="flex h-4 w-[9px] items-end pb-px">
          <span className="h-[2px] w-[9px] bg-[#555]" />
        </button>
        <button aria-label="还原">
          <Svg s={13} vb={13}>
            <path d="M3.500 5V1.500H12.500V7.500H10M.5 5.500H9.500V11.500H.5Z" stroke="#444" strokeWidth="1.300" />
          </Svg>
        </button>
        <button aria-label="关闭">
          <Svg s={12} vb={13}>
            <path d="M1 1L12 12M12 1L1 12" stroke="#444" strokeWidth="1.900" />
          </Svg>
        </button>
      </div>
    </header>
  );
}

const TABS = ["分析", "应用模块", "曲线", "渲染", "工具", "视图", "装配", "级进模向导", "主页", "曲面"];

function TabBar() {
  return (
    <nav className="flex h-7 shrink-0 items-stretch bg-[#dcdcdc] text-[13px] leading-5">
      <button className="w-[81px] bg-[#54a0b8] pb-[2px] text-center text-white">文件(F)</button>
      <div className="ml-[2px] flex">
        {TABS.map((t) => (
          <button key={t} className={t === "主页" ? "border-t border-[#a8a8a8] bg-white px-[13px] pb-[3px] whitespace-nowrap text-[#00688b]" : "px-[13px] pb-[2px] whitespace-nowrap"}>
            {t}
          </button>
        ))}
      </div>
      <div className="ml-auto flex items-center">
        <label className="flex h-5 w-[125px] items-center border border-[#ababab] bg-white px-[2px] text-[11px]">
          <input aria-label="查找命令" placeholder="查找命令" className="min-w-0 flex-1 leading-4 outline-none placeholder:text-[#a6a6a6]" />
          <Svg s={16}>
            <circle cx="12" cy="8" r="6" stroke="#444" strokeWidth="1.400" />
            <circle cx="12" cy="8" r="3" stroke="#444" />
            <path d="M8 12L2 18" stroke="#444" strokeWidth="3" />
          </Svg>
        </label>
        <button aria-label="全屏" className="ml-[11px]">
          <Svg s={16}>
            <path d="M1 5V1H5M15 1H19V5M19 15V19H15M5 19H1V15" stroke="#888" strokeWidth="1.500" />
            <path d="M4 4H16V16H4Z" fill="#fff" stroke="#333" strokeWidth="1.800" />
            <path d="M6 7H14V14H6Z" fill="#3b7ed4" />
          </Svg>
        </button>
        <button aria-label="折叠功能区" className="ml-[11px]">
          <Svg s={16}>
            <path d="M3 13L10 6L17 13L14 16L10 12L6 16Z" fill="#fff" stroke="#333" strokeWidth="1.500" strokeLinejoin="round" />
            <path d="M5 11L10 6L15 11" stroke="#333" strokeWidth="1.500" />
          </Svg>
        </button>
        <button aria-label="帮助" className="mr-1 ml-[10px] h-[14px] w-[14px] rounded-full bg-[#3d63c8] text-center text-[11px] leading-[14px] font-bold text-white">?</button>
      </div>
    </nav>
  );
}

function Ribbon() {
  return (
    <div className="flex h-[94px] shrink-0 items-start border-b border-[#d4d4d4] bg-white pt-[5px]">
      <Group label="直接草图" w="w-[178px]">
        <Big icon={icSketch} label="草图" w="ml-1 w-[50px]" />
        <div className="ml-[3px] grid h-[66px] w-[99px] grid-cols-3 place-items-center border border-[#d4d4d4]">
          {[icProfile, icRect, icLine, icArc, icCircle, icPlus].map((ic, i) => (
            <button key={i} aria-label={["轮廓", "矩形", "直线", "圆弧", "圆", "点"][i]}>
              {ic}
            </button>
          ))}
        </div>
        <div className="ml-1 flex h-[58px] w-[9px] flex-col items-center justify-between pt-[9px]">
          <button aria-label="上一行" className="rotate-180"><Caret muted /></button>
          <button aria-label="下一行"><Caret /></button>
          <button aria-label="全部" className="flex flex-col items-center gap-[2px]">
            <span className="h-px w-[7px] bg-[#1e1e1e]" />
            <Caret />
          </button>
        </div>
      </Group>
      <Group label="特征" w="w-[369px]">
        <Big icon={icPlane} label="基准平面" caret w="ml-[10px] w-[48px]" />
        <Big icon={icExtrude} label="拉伸" caret w="w-[44px]" />
        <Big icon={icHole} label="孔" w="w-[34px]" />
        <div className="-mt-1 ml-[7px] flex w-[74px] flex-col">
          <Small icon={icPattern} label="阵列特征" />
          <Small icon={icUnite} label="合并" caret />
          <Small icon={icShell} label="抽壳" />
        </div>
        <Big icon={icBlend} label="边倒圆" caret w="w-[38px]" />
        <div className="-mt-1 ml-[3px] flex w-[66px] flex-col">
          <Small icon={icChamfer} label="倒斜角" />
          <Small icon={icTrim} label="修剪体" />
          <Small icon={icDraft} label="拔模" active />
        </div>
        <Big icon={icMore} label="更多" caret framed w="ml-[2px] w-[38px]" />
      </Group>
      <Group label="同步建模" w="w-[172px]">
        <Big icon={icMoveFace} label="移动面" w="ml-[9px] w-[40px]" />
        <div className="-mt-1 ml-[1px] flex w-[77px] flex-col">
          <Small icon={icOffset} label="偏置区域" />
          <Small icon={icReplace} label="替换面" />
          <Small icon={icDelete} label="删除面" />
        </div>
        <Big icon={icSync} label="更多" caret framed w="ml-[2px] w-[38px]" />
      </Group>
      <Group label="标准化工具 - G..." w="w-[103px]" clip>
        <ToolGrid
          rows={[
            [gcSelect, gcLayers, gcLayerDoc, "|", gcTag],
            [gcPartA, gcPartB, gcPartC, "|", gcEdit],
          ]}
        />
      </Group>
      <Group label="齿轮..." w="w-[52px]" clip>
        <ToolGrid rows={[[gcGearA, gcGearB], [gcGearC]]} />
      </Group>
      <Group label="弹簧..." w="w-[58px]" clip>
        <ToolGrid rows={[[gcSpringA, gcSpringB], [gcDisc, "|", gcNoSpring]]} />
      </Group>
      <Group label="加工..." w="w-[52px]" clip>
        <ToolGrid
          rows={[
            [gcMachA, gcMachB],
            [gcMachC, gcCsys],
          ]}
        />
      </Group>
      <Group label="建模工具 - G..." w="w-[98px]" clip>
        <ToolGrid
          rows={[
            [gcTriangle, gcTable, gcFolderA, gcFolderB],
            [gcNote, gcBrush, "|", gcFind],
          ]}
        />
      </Group>
      <Group label="?.." w="w-[29px]" clip>
        <ToolGrid rows={[[gcBoxes], [gcBoxes]]} />
      </Group>
      <Group label="尺寸快速格式化工具 - GC工具箱" w="w-[288px]">
        <ToolGrid
          rows={[
            [
              dimShaft,
              "|",
              dimX,
              dimTol("±.05", null, "#b53232", ""),
              dimTol("+.05", "-.02", "#b53232", "#b53232"),
              dimTol("+.05", "-.00", "#b53232", "#888"),
              dimTol("+.00", "-.02", "#888", "#b53232"),
              dimBoxX,
              dimParenX,
              dimH7,
              dimH7b("10H7", "18.01"),
              dimH7b("10H7", "g015"),
              dimH7b("10", "g015"),
            ],
            [dimRadA, dimRadB, "|", dimDiaA, dimDiaB, dimBack],
          ]}
        />
      </Group>
      <section className="flex h-[84px] w-[43px] shrink-0 justify-center border-r border-[#dadada]">
        <Big icon={icSurface} label="曲面" caret w="w-[40px]" />
      </section>
      <Group label="装配" w="w-[181px]">
        <Big icon={icProcess} label="处理装配" disabled w="ml-[10px] w-[48px]" />
        <Big icon={icAdd} label="添加" caret w="ml-1 w-[38px]" />
        <div className="-mt-1 ml-[3px] flex flex-col">
          <Small icon={icConstraint} label="装配约束" />
          <Small icon={icMoveComp} label="移动组件" />
          <Small icon={icPatternComp} label="阵列组件" />
        </div>
      </Group>
      <button aria-label="功能区选项" className="mt-auto mb-2 ml-auto"><Caret /></button>
    </div>
  );
}

type Tool = { ic: ReactNode; on?: boolean } | "caret" | "sep";
const t = (ic: ReactNode, on = false): Tool => ({ ic, on });

const SELECTION: Tool[] = [
  t(sbTree), t(sbFilterOff), t(sbFilter), "caret", t(sbRot), t(sbRot2), t(sbCube), t(sbMarquee), "caret",
  t(sbSolid, true), t(sbBlue, true), t(sbSnap, true), t(sbEnd, true), t(sbMid, true), t(sbCurvePt), t(sbPoly, true), t(sbSpline, true),
  t(sbCross), t(sbCenter, true), t(sbQuad), t(sbPoint, true), t(sbOnLine, true), t(sbFacePt), t(sbMesh), t(sbGrid), "sep",
  t(sbZoom), t(sbPan), t(sbRotate), t(sbPersp), t(sbCard), t(sbLayout), "caret", t(sbDisc), "caret", t(sbShade), "caret", t(sbClip), "caret", "sep",
];

function Combo({ value, w, label }: { value: string; w: string; label: string }) {
  return (
    <span className={`relative flex h-5 shrink-0 border border-[#9a9a9a] bg-white ${w}`}>
      <select aria-label={label} className="w-full appearance-none pl-[2px] text-[11px] leading-4 outline-none">
        <option>{value}</option>
      </select>
      <span className="pointer-events-none absolute top-2 right-[5px]"><Caret /></span>
    </span>
  );
}

function SelectionBar() {
  return (
    <div className="flex h-8 shrink-0 items-center border-b border-[#8c9294] bg-white">
      <button className="flex w-[86px] items-center gap-[2px] pl-[9px] leading-4 whitespace-nowrap">
        {sbMenu}
        <span>
          菜单(<u>M</u>)
        </span>
        <span className="ml-[3px]"><Caret /></span>
      </button>
      <Sep h="h-[24px]" />
      <span className="w-3" />
      <Combo value="无选择过滤器" w="w-[133px]" label="选择过滤器" />
      <span className="w-[9px]" />
      <Combo value="整个装配" w="w-[140px]" label="选择范围" />
      <div className="ml-[2px] flex items-center">
        {SELECTION.map((it, i) => {
          if (it === "caret")
            return (
              <button key={i} aria-label="更多选项" className="flex h-5 w-[11px] items-center justify-center">
                <Caret />
              </button>
            );
          if (it === "sep")
            return (
              <span key={i} className="mx-[6px] flex w-px shrink-0">
                <Sep h="h-[24px]" />
              </span>
            );
          const { ic, on } = it as { ic: ReactNode; on?: boolean };
          return (
            <button key={i} aria-label={`选择工具 ${i}`} className={`mx-px flex h-[22px] w-[23px] items-center justify-center ${on ? "border border-[#a9d2dc] bg-[#cde6eb]" : ""}`}>
              {ic}
            </button>
          );
        })}
      </div>
      <button aria-label="工具条选项" className="mt-2 ml-auto"><Caret /></button>
    </div>
  );
}

const RESOURCES: [string, ReactNode, string][] = [
  ["设置", rbGear, "h-[26px] pr-[2px]"],
  ["装配导航器", rbAssembly, "mt-4 h-[42px] pl-[3px]"],
  ["约束导航器", rbConstraint, "h-[41px] pl-[3px]"],
  ["部件导航器", rbPart, "-mr-px ml-[2px] h-[45px] border border-r-0 border-[#9a9a9a] bg-white"],
  ["重用库", rbBooks, "h-[40px] pl-[3px]"],
  ["视图", rbEye, "h-[40px] pl-[3px]"],
  ["HD3D 工具", rbInfo, "mt-2 h-[54px] pl-[3px]"],
  ["Web 浏览器", rbPage, "h-[54px] pl-[3px]"],
  ["历史记录", rbClock, "h-[54px] pl-[3px]"],
  ["系统材料", rbPalette, "h-[34px] pl-[3px]"],
  ["加工向导", rbMachine, "h-[46px] pl-[3px]"],
  ["角色", rbTools, "h-[40px] pl-[3px]"],
];

function ResourceBar() {
  return (
    <nav className="flex w-8 shrink-0 flex-col items-stretch border-r border-[#9a9a9a] bg-[#dcdcdc]">
      {RESOURCES.map(([name, icon, cls]) => (
        <button key={name} aria-label={name} className={`flex shrink-0 items-center justify-center ${cls}`}>
          {icon}
        </button>
      ))}
    </nav>
  );
}

type Kind = "csys" | "sketch" | "extrude" | "shell" | "unite" | "measure";
const KIND_ICON: Record<Kind, ReactNode> = {
  csys: <Svg s={15}>{csysShape}</Svg>,
  sketch: trSketch,
  extrude: trExtrude,
  shell: <Svg s={15}>{shellShape}</Svg>,
  unite: <Svg s={15}>{uniteShape}</Svg>,
  measure: trMeasure,
};

const sk = (n: number, id: string, on = false): [Kind, string, boolean] => ["sketch", `草图 (${n}) "SKETCH_${id}"`, on];
const ex = (n: number): [Kind, string, boolean] => ["extrude", `拉伸 (${n})`, true];

const FEATURES: [Kind, string, boolean][] = [
  ["csys", "基准坐标系 (0)", false],
  sk(1, "000"), ex(2), sk(3, "001"), ex(4), sk(5, "002"), ex(6),
  ["shell", "壳 (7)", true],
  ex(8), sk(9, "003"), ex(10), sk(11, "004", true), sk(12, "005"), ex(13),
  ["shell", "壳 (14)", true],
  sk(15, "006"), ex(16),
  ["unite", "合并 (17)", true],
  ["measure", "距离测量 (18)", true],
  sk(19, "007"), ex(20), sk(21, "008"), ex(22), sk(23, "009", true), sk(24, "010"), ex(25), ex(26), ex(27),
  sk(28, "011"), ex(29), ex(30), sk(31, "012"), ex(32), sk(33, "013", true), sk(34, "014", true), sk(35, "015", true), sk(36, "016"),
];

function Chevron({ d }: { d: string }) {
  return (
    <svg width="9" height="9" viewBox="0 0 9 9" fill="none" aria-hidden="true">
      <path d={d} stroke="#505050" strokeWidth="2" />
    </svg>
  );
}

function PartNavigator() {
  return (
    <aside className="flex w-[329px] shrink-0 flex-col border-r border-[#76838c] bg-white pr-[9px] pl-[6px] text-[12px]">
      <div className="flex h-7 shrink-0 items-center justify-between pt-[2px] pr-[6px] pl-1">
        <h2 className="leading-5">部件导航器</h2>
        <button aria-label="最大化" className="h-[11px] w-3 border border-t-2 border-black" />
      </div>
      <div className="relative flex min-h-0 flex-1 flex-col border-2 border-[#dcdcdc]">
        <div className="min-h-0 flex-1 overflow-hidden">
          <table className="w-full table-fixed border-collapse">
            <thead>
              <tr className="h-[21px] bg-[#f0f0f0]">
                <th className="border-r border-b border-[#dadada] p-0 pl-[6px] text-left leading-5 font-normal">
                  <span className="flex items-center gap-[18px]">
                    名称
                    <svg width="10" height="5" viewBox="0 0 10 5" aria-hidden="true">
                      <path d="M5 0L10 5H0Z" fill="#111" />
                    </svg>
                  </span>
                </th>
                <th className="w-[30px] border-b border-[#dadada] p-0 pl-[6px] text-left leading-5 font-normal whitespace-nowrap">最新</th>
              </tr>
            </thead>
            <tbody>
              <tr className="h-5 bg-[#fafafa]">
                <td className="border-r border-b border-[#e8e8e8] p-0">
                  <div className="flex h-[19px] items-center pb-px pl-[5px] leading-[18px]">
                    <button aria-label="折叠" className="flex h-[9px] w-[9px] items-center justify-center border border-[#ababab] bg-white">
                      <span className="h-px w-[5px] bg-[#222]" />
                    </button>
                    <span className="mr-px w-[4px] border-t border-dotted border-[#999]" />
                    {trFolder}
                    <span className="ml-[3px]">模型历史记录</span>
                  </div>
                </td>
                <td className="border-b border-[#e8e8e8] p-0" />
              </tr>
              {FEATURES.map(([kind, name, on], i) => (
                <tr key={name} className={i % 2 ? "h-5 bg-[#fafafa]" : "h-5 bg-white"}>
                  <td className="border-r border-b border-[#e8e8e8] p-0">
                    <label className={`ml-7 flex h-[19px] items-center border-l border-dotted border-[#999] pb-[2px] leading-[17px] whitespace-nowrap ${on ? "text-[#141414]" : "text-[#a2a2a2]"}`}>
                      <span className="mr-[2px] ml-px w-2 border-t border-dotted border-[#999]" />
                      <span className="grid h-3 w-3 place-items-center">
                        <input type="checkbox" defaultChecked className="peer col-start-1 row-start-1 h-3 w-3 appearance-none border border-black bg-white" />
                        <svg width="10" height="10" viewBox="0 0 20 20" fill="none" className="pointer-events-none invisible col-start-1 row-start-1 peer-checked:visible">
                          <path d="M2 9L8 15L18 4" stroke="#17a62c" strokeWidth="4.500" />
                        </svg>
                      </span>
                      <span className="mr-[3px] ml-[2px]">{KIND_ICON[kind]}</span>
                      {name}
                    </label>
                  </td>
                  <td className="border-b border-[#e8e8e8] p-0 pl-[6px]">
                    <svg width="12" height="12" viewBox="0 0 20 20" fill="none" aria-hidden="true">
                      <path d="M1 9L9 17L18 4" stroke="#14b42c" strokeWidth="6" />
                    </svg>
                  </td>
                </tr>
              ))}
            </tbody>
          </table>
        </div>
        <div className="absolute top-[21px] right-0 bottom-4 flex w-4 flex-col items-center bg-[#f0f0f0]">
          <button aria-label="向上滚动" className="flex h-[18px] items-center"><Chevron d="M1 7L4.500 3L8 7" /></button>
          <div className="w-full flex-[77]" />
          <div className="w-full flex-[582] bg-[#cdcdcd]" />
          <div className="w-full flex-[64]" />
          <button aria-label="向下滚动" className="flex h-4 items-center"><Chevron d="M1 2L4.500 6L8 2" /></button>
        </div>
        <div className="relative flex h-4 shrink-0 items-center bg-[#f0f0f0]">
          <button aria-label="向左滚动" className="flex w-[17px] justify-center"><Chevron d="M6 1L2 4.500L6 8" /></button>
          <div className="h-[15px] w-[157px] bg-[#cdcdcd]" />
          <button aria-label="向右滚动" className="mr-[20px] ml-auto"><Chevron d="M3 1L7 4.500L3 8" /></button>
        </div>
      </div>
      <div className="mb-[5px] h-1 shrink-0 border border-[#a8a8a8] bg-[#dcdcdc]" />
    </aside>
  );
}

const TOP = "#ffc404";
const FLAT = "#9a5b00";

function Grad({ id, p, stops }: { id: string; p: [number, number, number, number]; stops: [number, string][] }) {
  return (
    <linearGradient id={id} gradientUnits="userSpaceOnUse" x1={p[0]} y1={p[1]} x2={p[2]} y2={p[3]}>
      {stops.map(([o, c]) => (
        <stop key={o} offset={o} stopColor={c} />
      ))}
    </linearGradient>
  );
}

function Model() {
  return (
    <svg viewBox="361 203 1553 814" preserveAspectRatio="xMinYMin meet" className="h-full w-full" role="img" aria-label="零件模型">
      <defs>
        <Grad id="base" p={[447, 0, 1486, 0]} stops={[[0, "#a66400"], [0.3, "#925800"], [0.42, "#905600"], [0.65, "#ab6700"], [0.85, "#cc7900"], [1, "#df8700"]]} />
        <Grad id="collar" p={[645, 0, 1257, 0]} stops={[[0, "#b06a00"], [0.1, "#a26100"], [0.38, "#8b5400"], [0.6, "#a06000"], [0.8, "#c07200"], [0.93, "#dc8500"], [1, "#e08800"]]} />
        <Grad id="body" p={[235, 0, 1170, 0]} stops={[[0, "#ab6700"], [0.1, "#985a00"], [0.56, "#9a5b00"], [0.68, "#8b5400"], [0.8, "#a56300"], [0.93, "#c97700"], [1, "#df8700"]]} />
        <Grad id="lugR" p={[1325, 0, 1472, 0]} stops={[[0, "#925800"], [0.4, "#a26100"], [1, "#df8700"]]} />
        <Grad id="lugB" p={[580, 0, 748, 0]} stops={[[0, "#b46c00"], [0.45, "#925800"], [0.7, "#9e5f00"], [1, "#cf7c00"]]} />
        <linearGradient id="hole">
          <stop offset="0" stopColor="#cf7c00" />
          <stop offset=".45" stopColor="#a36200" />
          <stop offset=".72" stopColor="#8b5400" />
          <stop offset="1" stopColor="#a96500" />
        </linearGradient>
        <Grad id="tube" p={[1150, 118, 1060, 480]} stops={[[0, "#ffb000"], [0.26, "#ffc81e"], [0.36, "#ffb419"], [0.43, "#fd9a10"], [0.5, "#d67f00"], [0.62, "#aa6700"], [0.82, "#7f4c00"], [1, "#573400"]]} />
        <Grad id="bore" p={[1245, 205, 1195, 465]} stops={[[0, "#6e4200"], [0.25, "#9c5d00"], [0.38, "#cf7c04"], [0.45, "#fb960f"], [0.58, "#ffc21c"], [0.8, "#ffd011"], [1, "#ffb20c"]]} />
        <Grad id="neck" p={[340, 175, 545, 345]} stops={[[0, "#ff9200"], [0.18, "#ffb602"], [0.5, "#ffda12"], [0.7, "#ffc404"], [0.95, "#ff9405"], [1, "#ef8600"]]} />
        <Grad id="earEdge" p={[57, 0, 623, 0]} stops={[[0, "#ff8c00"], [0.15, "#ffb000"], [0.45, "#ffb804"], [0.55, "#ffc804"], [0.85, "#ffcf06"], [0.93, "#f99505"], [1, "#b06a00"]]} />
        <Grad id="earHole" p={[262, 325, 375, 450]} stops={[[0, "#f08a00"], [0.3, "#ffa80a"], [0.62, "#ffda12"], [0.85, "#ffc606"], [1, "#ffa008"]]} />
        <Grad id="earHoleS" p={[82, 0, 150, 0]} stops={[[0, "#ff9205"], [0.5, "#ffc606"], [1, "#ffda12"]]} />
        <Grad id="earHoleR" p={[490, 0, 560, 0]} stops={[[0, "#ff9205"], [0.5, "#ffc606"], [1, "#ffda12"]]} />
        <Grad id="plate" p={[53, 0, 1490, 0]} stops={[[0, "#ab6700"], [0.05, "#9a5b00"], [0.61, "#9a5b00"], [0.66, "#905600"], [0.7, "#a56300"], [0.76, "#d47e00"], [0.97, "#d47e00"], [1, "#e08800"]]} />
        <Grad id="slot" p={[332, 300, 1202, 320]} stops={[[0, "#df8700"], [0.08, "#cc7900"], [0.14, "#aa6600"], [0.25, "#9a5c00"], [0.31, "#895200"], [0.36, "#9a5b00"], [0.92, "#9a5b00"], [1, "#a96500"]]} />
      </defs>

      <g transform="translate(690 500) scale(.35714 .33333)">
        {/* upper-left and rear lugs */}
        <path d="M462 615L466 650L468 684L490 655Z" fill="#a86500" />
        <path d="M1349 472V495L1338 492Z" fill="#c97700" />
        <path d="M1200 510L1280 426C1325 428 1351 450 1349 475L1341 491L1300 560Z" fill={TOP} />
        {/* base disc */}
        <path d="M446 768L453 850C456 905 500 970 590 1022L748 1075C800 1083 850 1086 900 1086C1080 1084 1230 1030 1330 968L1462 835C1480 810 1487 775 1486 745L1478 650Z" fill="url(#base)" />
        <path d="M446 768C446 725 462 688 485 653C470 645 462 632 462 615C464 578 515 557 570 557C585 557 598 558 606 561L602 546L645 525L700 470L1240 490L1341 490C1425 530 1478 592 1478 660C1478 712 1460 760 1431 805L1325 900C1205 975 1060 1018 900 1018C850 1018 790 1014 743 1008L594 962C530 925 490 880 470 840C453 815 446 790 446 768Z" fill={TOP} />
        <path d="M602 546C625 555 641 568 641 585L640 600C634 580 621 565 603 557Z" fill="#915700" />
        <ellipse cx="552" cy="608" rx="45" ry="26" fill="url(#hole)" />
        <ellipse cx="1262" cy="477" rx="41" ry="25" fill="url(#hole)" />
        {/* right lug */}
        <path d="M1325 900L1330 967C1340 970 1355 971 1375 971C1425 970 1470 945 1473 908L1466 858Z" fill="url(#lugR)" />
        <path d="M1431 815C1453 823 1466 840 1466 860C1464 895 1420 917 1370 917C1350 916 1335 912 1323 900L1285 865Z" fill={TOP} />
        <path d="M1285 866C1277 822 1330 799 1385 799C1405 799 1420 800 1431 804V818C1385 806 1310 818 1285 866Z" fill="#a05f00" />
        <path d="M1330 900L1300 870L1312 835L1380 812L1431 817L1440 870Z" fill={TOP} />
        <ellipse cx="1375" cy="865" rx="45" ry="26" fill="url(#hole)" />
        {/* front lug */}
        <path d="M580 1000L586 1065C596 1090 630 1103 665 1103C705 1102 740 1092 748 1075L743 1006Z" fill="url(#lugB)" />
        <path d="M594 970L685 940L755 972L743 1012C732 1035 700 1047 660 1047C615 1047 580 1028 580 1000C580 990 585 980 594 970Z" fill={TOP} />
        <path d="M594 962C620 938 650 930 685 930C725 931 762 950 761 972L758 976C745 955 715 942 685 943C650 945 610 955 594 973Z" fill="#a05f00" />
        <ellipse cx="670" cy="996" rx="45" ry="26" fill="url(#hole)" />
        {/* collar */}
        <path d="M644 545L667 765C675 840 780 891 920 891C1100 891 1250 810 1257 705V690L1239 500L900 560Z" fill="url(#collar)" />
        <path d="M651 496C642 520 643 550 652 575C685 640 790 677 900 677C1080 677 1220 600 1237 498L1170 470H700Z" fill={TOP} />
        {/* body */}
        <path d="M233 50L251 230L600 480L701 508L704 540C720 605 800 641 900 641C1040 641 1155 580 1170 505V440L1130 110L800 60Z" fill="url(#body)" />
        {/* side tube */}
        <path d="M1133 116L1270 162L1190 507L1160 501L1030 462C975 445 947 405 947 350C950 300 975 252 1008 226Z" fill="url(#tube)" />
        <path d="M1245 160C1290 155 1317 205 1316 280C1312 390 1250 505 1190 507C1140 507 1121 450 1121 380C1125 260 1190 165 1245 160Z" fill="#d68000" />
        <path d="M1243 207C1275 207 1291 245 1291 300C1289 380 1245 460 1200 462C1165 462 1147 425 1147 370C1150 290 1200 210 1243 207Z" fill="url(#bore)" />
        {/* carburettor ear */}
        <path d="M300 228L385 152C400 138 430 134 458 146C525 176 568 240 568 300C568 320 565 332 560 345L400 275Z" fill="url(#neck)" />
        <path d="M57 290C60 270 75 250 95 232C105 222 120 219 140 219L305 226L340 240L420 266L570 345C605 368 623 400 623 440C622 458 618 468 610 478L578 512L545 521L300 400Z" fill="url(#earEdge)" />
        <path d="M55 295C57 270 75 250 110 251L290 258C310 261 325 266 345 276L535 385C565 400 588 430 588 465C588 500 575 520 548 521L350 514C335 512 325 508 315 502L100 377C70 360 55 325 55 295Z" fill={FLAT} />
        <path d="M80 312C80 290 95 278 110 280C135 285 156 315 155 335C154 355 145 366 130 365C105 362 80 335 80 312Z" fill="url(#earHoleS)" />
        <path d="M117 283C118 302 130 326 154 331C150 305 135 287 117 283Z" fill="#dadbdd" />
        <path d="M254 355C254 325 275 307 300 307C345 310 391 370 391 415C388 445 370 465 345 465C300 463 254 405 254 355Z" fill="url(#earHole)" />
        <path d="M489 435C489 415 500 405 520 405C545 412 564 445 564 465C562 485 550 493 537 492C510 490 489 460 489 435Z" fill="url(#earHoleR)" />
        <path d="M526 406C528 430 540 452 564 459C560 435 545 410 526 406Z" fill={FLAT} />
      </g>

      {/* top plate */}
      <g transform="translate(670 330) scale(.33333)">
        <path d="M53 395L62 475C70 495 90 508 125 517L310 570L885 742C950 760 975 768 1010 768C1070 768 1110 760 1137 740L1275 625L1475 460C1485 450 1490 440 1490 425L1481 350Z" fill="url(#plate)" />
        <path d="M53 393C52 375 65 359 85 343L390 92C420 63 470 48 530 48C560 49 575 52 595 59L1430 300C1465 312 1481 330 1481 352C1480 372 1470 385 1450 401L1165 645C1125 688 1065 701 1010 701C985 700 965 696 945 690L115 450C78 440 54 420 53 393Z" fill={TOP} />
        <path d="M331 320C335 250 430 198 565 198C600 198 635 203 665 212L1120 345C1175 362 1202 390 1202 425C1200 500 1090 550 965 550C930 549 900 545 870 537L430 408C370 390 330 360 331 320Z" fill="url(#slot)" />
        {[[503, 118], [182, 383], [1352, 365], [1031, 630]].map(([x, y]) => (
          <ellipse key={x} cx={x} cy={y} rx="49" ry="25" transform={`rotate(-4 ${x} ${y})`} fill="url(#hole)" />
        ))}
      </g>

      {/* view triad */}
      <g transform="translate(360 900) scale(.33333)" fill="none">
        <path d="M182 94L246 114L253 180L208 218L144 199L135 134Z" fill="#d2d3d5" stroke="#a2a2a2" strokeWidth="3" />
        <path d="M182 94L192 152L144 199M192 152L253 180" stroke="#ababab" strokeWidth="3" />
        <path d="M196 150L112 126" stroke="#cf3030" strokeWidth="7" />
        <path d="M92 121L120 119L114 135Z" fill="#cf3030" />
        <path d="M202 148L260 102" stroke="#2f9e35" strokeWidth="8" />
        <path d="M275 90L254 97L264 110Z" fill="#2f9e35" />
        <path d="M200 160L209 245" stroke="#1030b4" strokeWidth="8" />
        <path d="M213 264L200 238H217Z" fill="#1030b4" />
        <circle cx="199" cy="152" r="13" fill="#d8d8d8" />
        <circle cx="195" cy="147" r="6" fill="#fff" />
        <g fontFamily="Liberation Sans" fontSize="34">
          <text x="69" y="129" fill="#cc3c3c">X</text>
          <text x="273" y="94" fill="#3f9b44">Y</text>
          <text x="203" y="289" fill="#3048e0">Z</text>
        </g>
      </g>
    </svg>
  );
}

function Viewport() {
  return (
    <main className="flex min-w-0 flex-1 flex-col">
      <div className="flex h-[23px] shrink-0 items-stretch border-b-2 border-[#54a0b8] bg-white">
        <div className="flex w-[140px] items-center bg-[#54a0b8] pl-[6px] text-[12px] leading-4 text-white">
          <Svg s={15}>
            <Box x={2} y={0} s={9} c={["#9fc0ff", "#3f6cf0", "#1d3fc0"]} />
            <Box x={2} y={7} s={11} c={["#9fc0ff", "#3f6cf0", "#1d3fc0"]} />
            <Box x={9} y={6} s={10} c={["#9fc0ff", "#3f6cf0", "#1d3fc0"]} />
          </Svg>
          <span className="ml-[5px]">_model81.prt</span>
          <span className="ml-2">
            <Svg s={11} vb={11}>
              <path d="M8 7V10H1V1H8V2M4 6L7 6L9 3M6 3H10V6" stroke="#fff" strokeWidth="1.300" />
            </Svg>
          </span>
          <button aria-label="关闭文件" className="ml-[6px]">
            <Svg s={9} vb={9}>
              <path d="M1 1L8 8M8 1L1 8" stroke="#fff" strokeWidth="2" />
            </Svg>
          </button>
        </div>
      </div>
      <div className="relative min-h-0 flex-1 bg-linear-to-b from-[#b2b3b5] to-[#e6e8ea] to-75%">
        <Model />
        <p className="absolute right-1 bottom-0 font-['Liberation_Mono','Noto_Sans_CJK_SC',monospace] text-[13px] leading-[22px] font-light whitespace-nowrap text-[#7c7c7c]">
          UG<span className="text-[16px]">爱好者论坛</span> WWW.UGSNX.COM
        </p>
      </div>
    </main>
  );
}

export default function App() {
  return (
    <div className="flex h-screen flex-col overflow-hidden bg-white font-['Open_Sans','Noto_Sans_CJK_SC',sans-serif] text-[11px] text-[#1e1e1e]">
      <TitleBar />
      <TabBar />
      <Ribbon />
      <SelectionBar />
      <div className="flex min-h-0 flex-1">
        <ResourceBar />
        <PartNavigator />
        <Viewport />
      </div>
    </div>
  );
}
